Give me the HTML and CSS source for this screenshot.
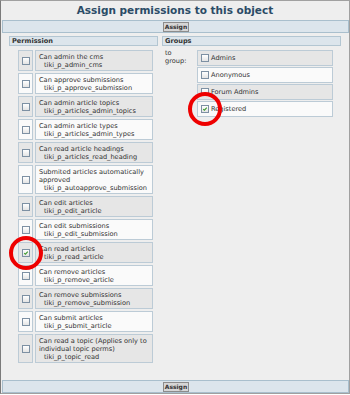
FILE: index.html
```html
<!DOCTYPE html>
<html lang="en">
<head>
  <meta charset="UTF-8" />
  <title>Assign permissions to this object</title>
  <link rel="stylesheet" href="styles.css">
</head>
<body>
  <div class="perm-box">
    <h2 class="title">Assign permissions to this object</h2>

    <div class="bar">
      <button type="button" class="btn">Assign</button>
    </div>

    <div class="columns">
      <div class="col">
        <div class="col-head">Permission</div>
        <table class="perms">
          <tr class="odd">
            <td class="chk"><span class="cb"></span></td>
            <td class="desc">Can admin the cms<span class="name">tiki_p_admin_cms</span></td>
          </tr>
          <tr class="even">
            <td class="chk"><span class="cb"></span></td>
            <td class="desc">Can approve submissions<span class="name">tiki_p_approve_submission</span></td>
          </tr>
          <tr class="odd">
            <td class="chk"><span class="cb"></span></td>
            <td class="desc">Can admin article topics<span class="name">tiki_p_articles_admin_topics</span></td>
          </tr>
          <tr class="even">
            <td class="chk"><span class="cb"></span></td>
            <td class="desc">Can admin article types<span class="name">tiki_p_articles_admin_types</span></td>
          </tr>
          <tr class="odd">
            <td class="chk"><span class="cb"></span></td>
            <td class="desc">Can read article headings<span class="name">tiki_p_articles_read_heading</span></td>
          </tr>
          <tr class="even">
            <td class="chk"><span class="cb"></span></td>
            <td class="desc">Submited articles automatically approved<span class="name">tiki_p_autoapprove_submission</span></td>
          </tr>
          <tr class="odd">
            <td class="chk"><span class="cb"></span></td>
            <td class="desc">Can edit articles<span class="name">tiki_p_edit_article</span></td>
          </tr>
          <tr class="even">
            <td class="chk"><span class="cb"></span></td>
            <td class="desc">Can edit submissions<span class="name">tiki_p_edit_submission</span></td>
          </tr>
          <tr class="odd">
            <td class="chk">
              <span class="cb checked"><svg viewBox="0 0 8 8"><path d="M1.6 4.1 L3.2 5.6 L6.4 2.2" /></svg></span>
              <span class="ring"></span>
            </td>
            <td class="desc">Can read articles<span class="name">tiki_p_read_article</span></td>
          </tr>
          <tr class="even">
            <td class="chk"><span class="cb"></span></td>
            <td class="desc">Can remove articles<span class="name">tiki_p_remove_article</span></td>
          </tr>
          <tr class="odd">
            <td class="chk"><span class="cb"></span></td>
            <td class="desc">Can remove submissions<span class="name">tiki_p_remove_submission</span></td>
          </tr>
          <tr class="even">
            <td class="chk"><span class="cb"></span></td>
            <td class="desc">Can submit articles<span class="name">tiki_p_submit_article</span></td>
          </tr>
          <tr class="odd">
            <td class="chk"><span class="cb"></span></td>
            <td class="desc">Can read a topic (Applies only to individual topic perms)<span class="name">tiki_p_topic_read</span></td>
          </tr>
        </table>
      </div>

      <div class="col">
        <div class="col-head">Groups</div>
        <div class="groups">
          <div class="to-group">to<br>group:</div>
          <div class="group-list">
            <div class="group odd"><span class="cb"></span>Admins</div>
            <div class="group even"><span class="cb"></span>Anonymous</div>
            <div class="group odd"><span class="cb"></span>Forum Admins</div>
            <div class="group even">
              <span class="cb checked"><svg viewBox="0 0 8 8"><path d="M1.6 4.1 L3.2 5.6 L6.4 2.2" /></svg></span>Registered
              <span class="ring ring-group"></span>
            </div>
          </div>
        </div>
      </div>
    </div>

    <div class="bar">
      <button type="button" class="btn">Assign</button>
    </div>
  </div>
</body>
</html>
```

FILE: styles.css
```css
body {
  margin: 0;
  padding: 0;
  font-family: "DejaVu Sans", Verdana, sans-serif;
  font-size: 6.6px;
  color: #333333;
  background: #ffffff;
}
.perm-box {
  box-sizing: border-box;
  width: 350px;
  height: 394px;
  border: 1px solid #a0a0a0;
  border-left-color: #7a7a7a;
  background-color: #eeeeee;
  display: flex;
  flex-direction: column;
}
.title {
  margin: 0;
  height: 19px;
  line-height: 19px;
  text-align: center;
  font-size: 10.5px;
  font-weight: bold;
  color: #2b4b66;
}
.bar {
  box-sizing: border-box;
  height: 13px;
  margin-left: 1px;
  background-color: #dce5ec;
  border: 1px solid #a9bfcd;
  display: flex;
  justify-content: center;
  align-items: center;
}
.btn {
  box-sizing: border-box;
  height: 10px;
  padding: 0 1px;
  margin-left: 1px;
  font-family: "DejaVu Sans", Verdana, sans-serif;
  font-size: 6px;
  font-weight: bold;
  line-height: 8px;
  color: #333333;
  background-color: #d6d6d6;
  border: 1px solid #8c8c8c;
  border-radius: 0;
}
.columns {
  flex: 1;
  display: grid;
  grid-template-columns: 149px 179px;
  column-gap: 4px;
  align-items: start;
  padding: 3px 0 0 8px;
}
.col-head {
  box-sizing: border-box;
  height: 10px;
  line-height: 8px;
  padding-left: 2px;
  font-weight: bold;
  background-color: #dce5ec;
  border: 1px solid #b3c6d2;
}
.perms {
  width: 139px;
  margin: 2px 0 0 7px;
  border-spacing: 2px;
}
.perms td {
  border: 1px solid #bccbd6;
  line-height: 8px;
}
.odd td,
.group.odd {
  background-color: #e6e6e6;
}
.even td,
.group.even {
  background-color: #fafafa;
}
.perms .chk {
  box-sizing: border-box;
  width: 15px;
  padding: 0;
  text-align: center;
  position: relative;
}
.perms .desc {
  padding: 2px 3px 1px 3px;
}
.name {
  display: block;
  padding-left: 5px;
}
.cb {
  box-sizing: border-box;
  display: inline-block;
  width: 8px;
  height: 8px;
  vertical-align: middle;
  border: 1px solid #7d90a3;
  background: linear-gradient(#ffffff, #e4e4e4);
}
.cb svg {
  display: block;
  width: 6px;
  height: 6px;
}
.cb svg path {
  fill: none;
  stroke: #3a9a2c;
  stroke-width: 1.4;
}
.ring {
  position: absolute;
  left: 50%;
  top: 50%;
  width: 34px;
  height: 34px;
  box-sizing: border-box;
  margin: -17px 0 0 -17px;
  border: 4px solid #ee0000;
  border-radius: 50%;
  z-index: 2;
}
.groups {
  display: flex;
  margin-top: 3px;
}
.to-group {
  width: 32px;
  padding-left: 3px;
  line-height: 8px;
}
.group-list {
  width: 136px;
  display: flex;
  flex-direction: column;
  gap: 1px;
  margin-top: 1px;
}
.group {
  box-sizing: border-box;
  height: 16px;
  display: flex;
  align-items: center;
  gap: 2px;
  padding-left: 3px;
  border: 1px solid #bccbd6;
  position: relative;
}
.ring-group {
  left: 7px;
}
```
